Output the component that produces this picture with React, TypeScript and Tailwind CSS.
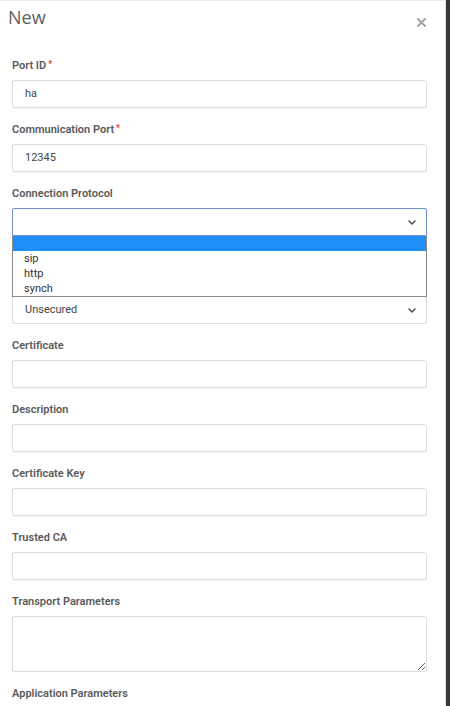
import type { ReactNode } from 'react'

const FONT = { fontFamily: 'Roboto, "Open Sans", Arial, sans-serif' }

function Chevron() {
  return (
    <svg width="8" height="5" viewBox="0 0 8 5" className="text-[#555]">
      <path d="M1 1 L4 4 L7 1" fill="none" stroke="currentColor" strokeWidth="1.6" strokeLinecap="round" strokeLinejoin="round" />
    </svg>
  )
}

function Label({ children, required }: { children: ReactNode; required?: boolean }) {
  return (
    <div className="h-4 leading-4 mb-[6px] text-[11px] font-semibold text-[#5a5a5a]">
      {children}
      {required && <span className="relative -top-[2px] ml-[2px] text-[9px] text-[#e0413a]">*</span>}
    </div>
  )
}

function TextInput({ value }: { value?: string }) {
  return (
    <div className="h-7 rounded-[2px] border border-[#dedede] bg-white shadow-[0_1px_1px_rgba(0,0,0,0.04)] px-3 flex items-center text-[11px] text-[#444]">
      {value}
    </div>
  )
}

function Field({ label, required, value }: { label: string; required?: boolean; value?: string }) {
  return (
    <div className="mb-[14px]">
      <Label required={required}>{label}</Label>
      <TextInput value={value} />
    </div>
  )
}

const OPTIONS = ['', 'sip', 'http', 'synch']

export default function App() {
  return (
    <div className="flex h-[706px] overflow-hidden bg-[#33363a]" style={FONT}>
      <div className="w-[446px] shrink-0 bg-white border-r border-[#e4e4e4] border-t border-t-[#ececec]">
        <div className="flex items-start justify-between pl-2 pr-[19px] pt-[4px] h-[57px]">
          <h1 className="text-[18px] leading-6 font-normal text-[#5f5f5f]" style={{ fontFamily: '"Open Sans", Roboto, sans-serif' }}>New</h1>
          <svg width="9" height="9" viewBox="0 0 9 9" className="mt-[13px] text-[#9ea3a8]">
            <path d="M1 1 L8 8 M8 1 L1 8" stroke="currentColor" strokeWidth="2" strokeLinecap="round" />
          </svg>
        </div>

        <div className="pl-3 pr-[18px]">
          <Field label="Port ID" required value="ha" />
          <Field label="Communication Port" required value="12345" />

          <div className="mb-[14px]">
            <Label>Connection Protocol</Label>
            <div className="relative">
              <div className="h-7 rounded-t-[2px] border border-[#6f8fcf] bg-white flex items-center justify-end pr-[10px]">
                <Chevron />
              </div>
              <div className="absolute left-0 right-0 top-full z-10 border border-t-0 border-[#8a8a8a] bg-white text-[11px] text-[#333]">
                {OPTIONS.map((o, i) => (
                  <div
                    key={i}
                    className={`h-[15px] leading-[15px] px-[11px] ${i === 0 ? 'bg-[#1f8ef7]' : ''}`}
                  >
                    {o}
                  </div>
                ))}
              </div>
            </div>
          </div>

          {/* label of this select is hidden behind the open list */}
          <div className="mb-[14px] pt-[46px]">
            <div className="h-7 rounded-[2px] border border-[#dedede] bg-white pl-3 pr-[10px] flex items-center justify-between text-[11px] text-[#444]">
              Unsecured
              <Chevron />
            </div>
          </div>

          <Field label="Certificate" />
          <Field label="Description" />
          <Field label="Certificate Key" />
          <Field label="Trusted CA" />

          <div className="mb-[14px]">
            <Label>Transport Parameters</Label>
            <textarea className="block w-full h-[56px] rounded-[2px] border border-[#dedede] bg-white resize-y outline-none" />
          </div>

          <Label>Application Parameters</Label>
        </div>
      </div>
      <div className="flex-1" />
    </div>
  )
}
